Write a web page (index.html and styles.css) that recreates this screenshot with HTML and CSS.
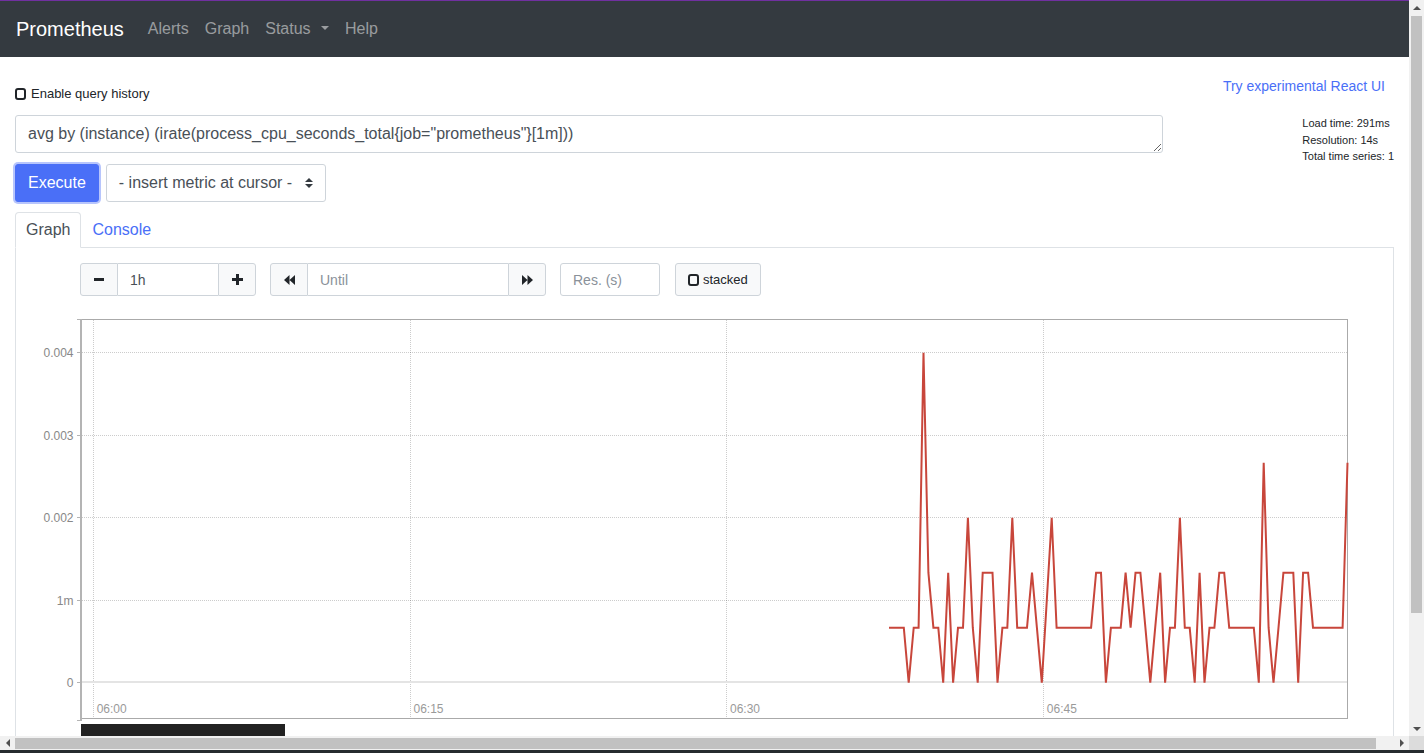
FILE: index.html
```html
<!DOCTYPE html>
<html lang="en">
<head>
<meta charset="utf-8">
<title>Prometheus Time Series Collection and Processing Server</title>
<link rel="stylesheet" href="styles.css">
</head>
<body>
<nav class="navbar">
  <a class="brand" href="#">Prometheus</a>
  <ul class="nav-links">
    <li><a href="#">Alerts</a></li>
    <li><a href="#">Graph</a></li>
    <li><a href="#">Status <span class="caret"></span></a></li>
    <li><a href="#">Help</a></li>
  </ul>
</nav>
<main class="container">
  <div class="top-row">
    <label class="history"><span class="check-icon"></span>Enable query history</label>
    <a class="react-link" href="#">Try experimental React UI</a>
  </div>
  <div class="query-grid">
    <textarea class="expr" rows="1" spellcheck="false">avg by (instance) (irate(process_cpu_seconds_total{job=&quot;prometheus&quot;}[1m]))</textarea>
    <div class="eval-stats">
      <div>Load time: 291ms</div>
      <div>Resolution: 14s</div>
      <div>Total time series: 1</div>
    </div>
    <div class="exec-row">
      <button class="btn-execute" type="button">Execute</button>
      <div class="metric-select">
        <span>- insert metric at cursor -</span>
        <svg class="select-arrows" width="8" height="10" viewBox="0 0 4 5"><path d="M2 0L0 2h4zm0 5L0 3h4z"/></svg>
      </div>
    </div>
  </div>
  <ul class="tabs">
    <li class="tab active">Graph</li>
    <li class="tab">Console</li>
  </ul>
  <div class="tab-panel">
    <div class="controls">
      <div class="input-group">
        <button class="ctl-btn first" type="button"><svg class="icon" width="10" height="3" viewBox="0 0 10 3"><rect width="10" height="3"/></svg></button>
        <input class="ctl-input w100" type="text" value="1h">
        <button class="ctl-btn last" type="button"><svg class="icon" width="11" height="11" viewBox="0 0 11 11"><path d="M4 0h3v4h4v3H7v4H4V7H0V4h4z"/></svg></button>
      </div>
      <div class="input-group">
        <button class="ctl-btn first" type="button"><svg class="icon" width="11" height="10" viewBox="0 0 11 10"><path d="M0 5L5.5 0v10zM5.5 5L11 0v10z"/></svg></button>
        <input class="ctl-input w200" type="text" placeholder="Until">
        <button class="ctl-btn last" type="button"><svg class="icon" width="11" height="10" viewBox="0 0 11 10"><path d="M11 5L5.5 0v10zM5.5 5L0 0v10z"/></svg></button>
      </div>
      <input class="ctl-input res-input w100" type="text" placeholder="Res. (s)">
      <button class="stacked-btn" type="button"><span class="check-icon"></span>stacked</button>
    </div>
    <div class="chart-wrap">
      <svg class="chart" width="1345" height="412" viewBox="0 0 1345 412">
        <g class="grid-dotted">
          <line x1="66" y1="42.5" x2="1331" y2="42.5"/>
          <line x1="66" y1="125.5" x2="1331" y2="125.5"/>
          <line x1="66" y1="207.5" x2="1331" y2="207.5"/>
          <line x1="66" y1="290.5" x2="1331" y2="290.5"/>
          <line x1="77.5" y1="10" x2="77.5" y2="408"/>
          <line x1="394.5" y1="10" x2="394.5" y2="408"/>
          <line x1="710.5" y1="10" x2="710.5" y2="408"/>
          <line x1="1027.5" y1="10" x2="1027.5" y2="408"/>
        </g>
        <line class="zero-line" x1="66" y1="372" x2="1331" y2="372"/>
        <rect class="frame" x="64.5" y="9.5" width="1267" height="399"/>
        <rect class="axis" x="64" y="9" width="2" height="402"/>
        <path class="ticks" d="M61 9.5H66M61 42.5H64M61 125.5H64M61 207.5H64M61 290.5H64M61 372.5H64M61 410.5H66"/>
        <polyline class="series" points="873,317.7 877.9,317.7 882.9,317.7 887.8,317.7 892.7,372.7 897.7,317.7 902.6,317.7 907.5,42.7 912.4,262.7 917.4,317.7 922.3,317.7 927.2,372.7 932.2,262.7 937.1,372.7 942,317.7 947,317.7 951.9,207.7 956.8,317.7 961.7,372.7 966.7,262.7 971.6,262.7 976.5,262.7 981.5,372.7 986.4,317.7 991.3,317.7 996.3,207.7 1001.2,317.7 1006.1,317.7 1011,317.7 1016,262.7 1020.9,317.7 1025.8,372.7 1030.8,290.2 1035.7,207.7 1040.6,317.7 1045.6,317.7 1050.5,317.7 1055.4,317.7 1060.3,317.7 1065.3,317.7 1070.2,317.7 1075.1,317.7 1080.1,262.7 1085,262.7 1089.9,372.7 1094.9,317.7 1099.8,317.7 1104.7,317.7 1109.6,262.7 1114.6,317.7 1119.5,262.7 1124.4,262.7 1129.4,317.7 1134.3,372.7 1139.2,317.7 1144.2,262.7 1149.1,372.7 1154,317.7 1158.9,317.7 1163.9,207.7 1168.8,317.7 1173.7,317.7 1178.7,372.7 1183.6,262.7 1188.5,372.7 1193.5,317.7 1198.4,317.7 1203.3,262.7 1208.2,262.7 1213.2,317.7 1218.1,317.7 1223,317.7 1228,317.7 1232.9,317.7 1237.8,317.7 1242.8,372.7 1247.7,152.7 1252.6,317.7 1257.5,372.7 1262.5,317.7 1267.4,262.7 1272.3,262.7 1277.3,262.7 1282.2,372.7 1287.1,262.7 1292.1,262.7 1297,317.7 1301.9,317.7 1306.8,317.7 1311.8,317.7 1316.7,317.7 1321.6,317.7 1326.6,317.7 1331.5,152.7"/>
        <g class="y-labels">
          <text x="57.5" y="47">0.004</text>
          <text x="57.5" y="129.5">0.003</text>
          <text x="57.5" y="212">0.002</text>
          <text x="57.5" y="294.5">1m</text>
          <text x="57.5" y="377">0</text>
        </g>
        <g class="x-labels">
          <text x="80.7" y="403">06:00</text>
          <text x="397.5" y="403">06:15</text>
          <text x="714" y="403">06:30</text>
          <text x="1030.8" y="403">06:45</text>
        </g>
      </svg>
    </div>
    <div class="legend"><span class="swatch"></span>{instance="localhost:9090"}</div>
  </div>
  <div class="add-row"><button class="btn-add" type="button">Add Graph</button></div>
</main>

<div class="sb-v" aria-hidden="true">
  <div class="sb-btn"><svg width="8" height="4" viewBox="0 0 8 4"><path d="M4 0L8 4H0z"/></svg></div>
  <div class="sb-track-v"><div class="sb-thumb-v"></div></div>
  <div class="sb-btn"><svg width="8" height="4" viewBox="0 0 8 4"><path d="M4 4L8 0H0z"/></svg></div>
</div>
<div class="sb-h" aria-hidden="true">
  <div class="sb-btn-h"><svg width="4" height="8" viewBox="0 0 4 8"><path d="M0 4L4 0v8z"/></svg></div>
  <div class="sb-track-h"><div class="sb-thumb-h"></div></div>
  <div class="sb-btn-h"><svg width="4" height="8" viewBox="0 0 4 8"><path d="M4 4L0 0v8z"/></svg></div>
</div>
<div class="sb-corner" aria-hidden="true"></div>
<div class="screen-edge" aria-hidden="true"></div>
</body>
</html>
```
FILE: styles.css
```css
* { box-sizing: border-box; }
html, body { margin: 0; padding: 0; }
body {
  width: 1409px;
  font-family: "Liberation Sans", Arial, sans-serif;
  font-size: 16px;
  line-height: 1.5;
  color: #212529;
  background: #fff;
}
a { text-decoration: none; }

/* navbar */
.navbar {
  display: flex;
  align-items: center;
  height: 57px;
  border-top: 1px solid #7030a0;
  background: #343a40;
  padding: 0 16px;
}
.brand { color: #fff; font-size: 20px; line-height: 30px; margin-right: 16px; }
.nav-links { display: flex; list-style: none; margin: 0; padding: 0; }
.nav-links a {
  display: block;
  padding: 8px;
  color: rgba(255, 255, 255, 0.5);
  font-size: 16px;
  line-height: 24px;
}
.caret {
  display: inline-block;
  margin-left: 6px;
  vertical-align: 0.255em;
  border-top: 0.3em solid;
  border-left: 0.3em solid transparent;
  border-right: 0.3em solid transparent;
}

/* page */
.container { padding: 0 15px; }
.top-row {
  display: flex;
  justify-content: space-between;
  align-items: flex-start;
  height: 58px;
  padding-top: 19px;
}
.history {
  display: flex;
  align-items: center;
  gap: 5px;
  margin-top: 9px;
  font-size: 13px;
  line-height: 18px;
  color: #212529;
}
.check-icon {
  display: inline-block;
  width: 11px;
  height: 12px;
  border: 2px solid #212529;
  border-radius: 3px;
  flex: none;
}
.react-link { font-size: 14px; line-height: 20px; color: #4a6ff7; margin-right: 9px; }

.query-grid {
  display: grid;
  grid-template-columns: 1148px 1fr;
  row-gap: 11px;
  align-items: start;
}
.expr {
  grid-column: 1;
  grid-row: 1;
  display: block;
  width: 100%;
  height: 38px;
  margin: 0;
  padding: 6px 12px;
  border: 1px solid #ced4da;
  border-radius: 3px;
  font: 16px/24px "Liberation Sans", Arial, sans-serif;
  color: #495057;
  resize: vertical;
  overflow: hidden;
}
.eval-stats {
  grid-column: 2;
  grid-row: 1 / span 2;
  justify-self: end;
  font-size: 11px;
  line-height: 16.5px;
  white-space: nowrap;
  color: #212529;
}
.exec-row { grid-column: 1; grid-row: 2; display: flex; gap: 7px; }
.btn-execute, .btn-add {
  height: 38px;
  padding: 0 12px;
  font: 16px "Liberation Sans", Arial, sans-serif;
  color: #fff;
  background: #4a6ff7;
  border: 1px solid #4a6ff7;
  border-radius: 3px;
}
.btn-execute { box-shadow: 0 0 0 2px rgba(74, 111, 247, 0.4); }
.metric-select {
  width: 220px;
  height: 38px;
  display: flex;
  align-items: center;
  justify-content: space-between;
  padding: 0 12px;
  border: 1px solid #ced4da;
  border-radius: 3px;
  color: #495057;
  font-size: 16px;
}
.select-arrows { fill: #343a40; }

/* tabs */
.tabs {
  display: flex;
  list-style: none;
  margin: 10px 0 0;
  padding: 0;
  border-bottom: 1px solid #dee2e6;
}
.tab {
  margin-bottom: -1px;
  padding: 5px 10px;
  border: 1px solid transparent;
  border-radius: 4px 4px 0 0;
  line-height: 24px;
  color: #4a6ff7;
}
.tab.active { color: #495057; background: #fff; border-color: #dee2e6 #dee2e6 #fff; }
.tab-panel {
  border: 1px solid #dee2e6;
  border-top: 0;
  padding: 15px 0 12px;
}

/* controls */
.controls { display: flex; align-items: center; gap: 14px; height: 33px; margin-left: 64px; }
.input-group { display: flex; }
.ctl-btn {
  width: 38px;
  height: 33px;
  display: flex;
  align-items: center;
  justify-content: center;
  padding: 0;
  background: #f8f9fa;
  border: 1px solid #ced4da;
}
.ctl-btn.first { border-radius: 3px 0 0 3px; }
.ctl-btn.last { border-radius: 0 3px 3px 0; }
.icon { fill: #212529; display: block; }
.ctl-input {
  height: 33px;
  margin: 0;
  padding: 0 12px;
  border: 1px solid #ced4da;
  border-left: 0;
  border-right: 0;
  font: 14px "Liberation Sans", Arial, sans-serif;
  color: #495057;
  outline: none;
}
.ctl-input::placeholder { color: #8a9199; }
.w100 { width: 100px; }
.w200 { width: 200px; }
.res-input { border-left: 1px solid #ced4da; border-right: 1px solid #ced4da; border-radius: 3px; }
.stacked-btn {
  height: 33px;
  display: flex;
  align-items: center;
  gap: 4px;
  margin-left: 1px;
  padding: 0 12px;
  background: #f8f9fa;
  border: 1px solid #ced4da;
  border-radius: 3px;
  font: 13px "Liberation Sans", Arial, sans-serif;
  color: #212529;
}

/* chart */
.chart-wrap { margin-top: 14px; }
.chart { display: block; font-family: "Liberation Sans", Arial, sans-serif; }
.grid-dotted line { stroke: rgba(0, 0, 0, 0.2); stroke-width: 1; stroke-dasharray: 1 1; }
.zero-line { stroke: #e4e4e4; stroke-width: 2; }
.frame { fill: none; stroke: #aaa; stroke-width: 1; }
.axis { fill: #b4b4b4; }
.ticks { stroke: #b4b4b4; stroke-width: 1; fill: none; }
.series { fill: none; stroke: #c8463b; stroke-width: 2; stroke-linejoin: miter; }
.y-labels text { font-size: 12px; fill: #888; text-anchor: end; }
.x-labels text { font-size: 12px; fill: #9a9a9a; }

.legend {
  display: flex;
  align-items: center;
  gap: 6px;
  width: 204px;
  height: 60px;
  margin: 2px 0 0 65px;
  padding: 32px 8px 10px;
  background: #222;
  color: #fff;
  font-size: 12px;
  line-height: 18px;
  white-space: nowrap;
  overflow: hidden;
}
.swatch { width: 10px; height: 10px; background: #c8463b; flex: none; }

.add-row { padding: 20px 0 49px; }

/* browser scrollbars drawn over the viewport edge */
.sb-v {
  position: fixed;
  top: 0;
  right: 0;
  width: 15px;
  height: 736px;
  display: flex;
  flex-direction: column;
  background: #f1f1f1;
}
.sb-btn { height: 15px; display: flex; align-items: center; justify-content: center; flex: none; }
.sb-btn svg, .sb-btn-h svg { fill: #505050; display: block; }
.sb-track-v { flex: 1; padding: 1px 2px 0; }
.sb-thumb-v { height: 597px; background: #c1c1c1; }
.sb-h {
  position: fixed;
  left: 0;
  bottom: 3px;
  width: 1409px;
  height: 14px;
  display: flex;
  background: #f1f1f1;
}
.sb-btn-h { width: 15px; display: flex; align-items: center; justify-content: center; flex: none; }
.sb-track-h { flex: 1; padding: 2px 0 1px; }
.sb-thumb-h { width: 1361px; height: 100%; background: #c1c1c1; }
.sb-corner {
  position: fixed;
  right: 0;
  bottom: 3px;
  width: 15px;
  height: 14px;
  background: #dcdcdc;
}
.screen-edge {
  position: fixed;
  left: 0;
  right: 0;
  bottom: 0;
  height: 3px;
  background: #262b2f;
}
```
